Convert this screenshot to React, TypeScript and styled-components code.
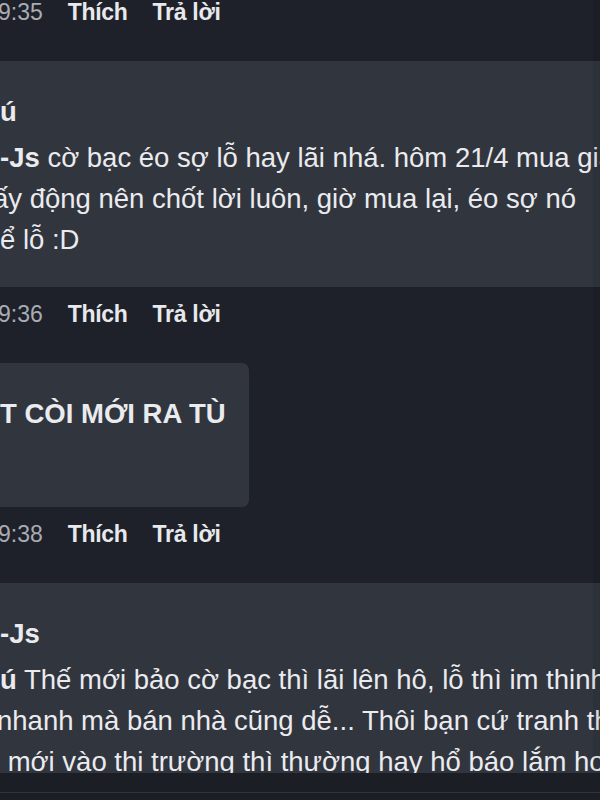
import React from "react";
import styled, { createGlobalStyle } from "styled-components";

const GlobalStyle = createGlobalStyle`
  html, body {
    margin: 0;
    padding: 0;
    width: 600px;
    height: 800px;
    overflow: hidden;
    background: #1e2129;
  }
  body {
    font-family: "Liberation Sans", Arial, sans-serif;
    color: #e6e7ea;
    -webkit-font-smoothing: antialiased;
  }
`;

const Screen = styled.div`
  width: 600px;
  height: 800px;
  display: flex;
  flex-direction: column;
  background: #1e2129;
`;

const Viewport = styled.div`
  position: relative;
  height: 773px;
  overflow: hidden;
  flex: none;
`;

const ScrollTrack = styled.div`
  position: absolute;
  top: 0;
  right: 0;
  bottom: 0;
  width: 7px;
  background: rgba(0, 0, 0, 0.07);
`;

const Thread = styled.div`
  display: flex;
  flex-direction: column;
  align-items: flex-start;
  gap: 33px;
  margin: -4px 0 0 -24px;
`;

const Comment = styled.div`
  display: flex;
  flex-direction: column;
  align-items: flex-start;
  gap: 11px;
`;

const Bubble = styled.div`
  display: flex;
  flex-direction: column;
  gap: 5px;
  padding: 30px 23px 27px 24px;
  background: #31353e;
  border-radius: 7px;
  font-size: 27.5px;
  line-height: 41px;
  color: #eaebee;
`;

const Name = styled.div`
  font-weight: 700;
  white-space: pre;
`;

const Body = styled.div`
  display: flex;
  flex-direction: column;
`;

const Line = styled.div<{ $indent?: number }>`
  white-space: pre;
  margin-left: ${(p) => p.$indent ?? 0}px;
`;

const Mention = styled.span`
  font-weight: 700;
`;

const ActionRow = styled.div`
  display: flex;
  align-items: center;
  gap: 25px;
  padding-left: 22px;
  height: 32px;
  font-size: 23px;
  line-height: 32px;
`;

const Time = styled.span`
  color: #a9acb3;
  font-weight: 400;
`;

const Action = styled.span`
  color: #e8e9ec;
  font-weight: 700;
  letter-spacing: -0.3px;
`;

const Footer = styled.div`
  flex: 1;
  display: flex;
  flex-direction: column;
  background: #1b1e24;
`;

const FooterRule = styled.div`
  margin-top: 19px;
  height: 1px;
  background: #30343b;
`;

const Actions: React.FC<{ time: string }> = ({ time }) => (
  <ActionRow>
    <Time>{time}</Time>
    <Action>Thích</Action>
    <Action>Trả lời</Action>
  </ActionRow>
);

export default function App() {
  return (
    <>
      <GlobalStyle />
      <Screen>
        <Viewport>
          <Thread>
            <Actions time="9:35" />
            <Comment>
              <Bubble>
                <Name>ú</Name>
                <Body>
                  <Line>
                    <Mention>-Js</Mention> cờ bạc éo sợ lỗ hay lãi nhá. hôm 21/4 mua giá
                  </Line>
                  <Line $indent={-7}>ấy động nên chốt lời luôn, giờ mua lại, éo sợ nó</Line>
                  <Line>ể lỗ :D</Line>
                </Body>
              </Bubble>
              <Actions time="9:36" />
            </Comment>
            <Comment>
              <Bubble>
                <Name>T CÒI MỚI RA TÙ</Name>
                <Body>
                  <Line>{"\u00a0"}</Line>
                </Body>
              </Bubble>
              <Actions time="9:38" />
            </Comment>
            <Comment>
              <Bubble>
                <Name>-Js</Name>
                <Body>
                  <Line>
                    <Mention>ú</Mention> Thế mới bảo cờ bạc thì lãi lên hô, lỗ thì im thinh
                  </Line>
                  <Line $indent={-3}>nhanh mà bán nhà cũng dễ... Thôi bạn cứ tranh thủ</Line>
                  <Line> mới vào thị trường thì thường hay hổ báo lắm hơn</Line>
                </Body>
              </Bubble>
            </Comment>
          </Thread>
          <ScrollTrack />
        </Viewport>
        <Footer>
          <FooterRule />
        </Footer>
      </Screen>
    </>
  );
}
